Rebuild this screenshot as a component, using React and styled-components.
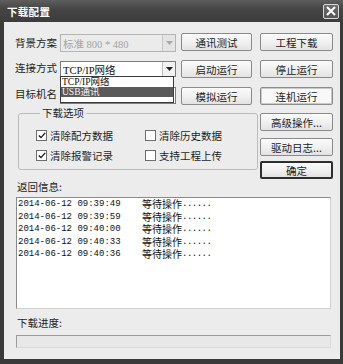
import React from "react";
import styled, { createGlobalStyle } from "styled-components";

const GlobalStyle = createGlobalStyle`
  html, body {
    margin: 0;
    padding: 0;
    background: #ffffff;
  }
  body {
    font-family: "Noto Sans CJK SC", "DejaVu Sans", sans-serif;
    color: #1e1e1e;
  }
`;

const Frame = styled.div`
  width: 343px;
  height: 364px;
  box-sizing: border-box;
  background: #3a3a3a;
  display: flex;
  flex-direction: column;
`;

const TitleBar = styled.div`
  height: 22px;
  flex: none;
  display: flex;
  align-items: center;
  justify-content: space-between;
  padding: 0 4px 0 7px;
  background: linear-gradient(#5e5e5e, #454545 40%, #3c3c3c);
`;

const Title = styled.span`
  color: #ffffff;
  font-size: 10.5px;
  font-weight: 700;
  letter-spacing: 0.3px;
`;

const CloseButton = styled.div`
  width: 16px;
  height: 15px;
  box-sizing: border-box;
  border: 1px solid #d8d8d8;
  border-radius: 2px;
  background: linear-gradient(#6c6c6c, #555555);
  display: flex;
  align-items: center;
  justify-content: center;
`;

const Body = styled.div`
  flex: 1;
  margin: 0 3px 5px 4px;
  background: #ececec;
  padding: 11px 7px 0 11px;
  display: flex;
  flex-direction: column;
`;

const TopGrid = styled.div`
  display: grid;
  grid-template-columns: 166px 79px 73px;
  grid-template-rows: 27px 27px 26px 25px 23px 20px;
`;

const FormRow = styled.div`
  grid-column: 1;
  grid-row: ${(p) => p.$row};
  display: flex;
  align-items: flex-start;
`;

const Label = styled.span`
  width: 45px;
  flex: none;
  font-size: 10.5px;
  line-height: 18px;
  margin-top: ${(p) => p.$top || 0}px;
`;

const Combo = styled.div`
  position: relative;
  width: 116px;
  height: ${(p) => p.$h}px;
  margin-top: ${(p) => p.$top || 0}px;
  box-sizing: border-box;
  border: 1px solid ${(p) => (p.$disabled ? "#b4b4b4" : "#7c7c7c")};
  background: ${(p) => (p.$disabled ? "#ebebeb" : "#ffffff")};
  display: flex;
  align-items: center;
  padding-left: 2px;
`;

const ComboText = styled.span`
  flex: 1;
  font-family: "Liberation Serif", "Noto Sans CJK SC", serif;
  font-size: 10.5px;
  color: ${(p) => (p.$disabled ? "#a2a2a2" : "#111111")};
  white-space: nowrap;
`;

const ArrowBox = styled.div`
  width: 13px;
  height: 100%;
  box-sizing: border-box;
  border-left: 1px solid ${(p) => (p.$disabled ? "#c8c8c8" : "#bdbdbd")};
  background: ${(p) => (p.$disabled ? "#e4e4e4" : "#f2f2f2")};
  display: flex;
  align-items: center;
  justify-content: center;
`;

const DropList = styled.div`
  position: absolute;
  top: 14px;
  left: -1px;
  width: 114px;
  height: 27px;
  box-sizing: border-box;
  border: 1px solid #3c3c3c;
  background: #ffffff;
  z-index: 2;
`;

const DropItem = styled.div`
  height: 10px;
  line-height: 10px;
  overflow: hidden;
  padding-left: 1px;
  font-family: "Liberation Serif", "Noto Sans CJK SC", serif;
  font-size: 9.5px;
  background: ${(p) => (p.$active ? "#5a5a5a" : "transparent")};
  color: ${(p) => (p.$active ? "#f4f4f4" : "#111111")};
  white-space: nowrap;
`;

const TextInput = styled.div`
  width: 116px;
  height: 17px;
  box-sizing: border-box;
  border: 1px solid #7c7c7c;
  background: #ffffff;
`;

const Button = styled.div`
  grid-column: ${(p) => p.$col};
  grid-row: ${(p) => p.$row};
  width: ${(p) => (p.$col === 2 ? 71 : 73)}px;
  height: 18px;
  box-sizing: border-box;
  border: ${(p) => (p.$default ? "2px solid #2e2e2e" : "1px solid #8a8a8a")};
  border-radius: 2px;
  background: ${(p) =>
    p.$focus ? "#f8f8f8" : "linear-gradient(#fbfbfb, #eeeeee 60%, #e2e2e2)"};
  box-shadow: ${(p) => (p.$focus ? "inset 0 0 0 1px #c9c9c9" : "none")};
  display: flex;
  align-items: center;
  justify-content: center;
  font-size: 10.5px;
  color: #222222;
  white-space: nowrap;
`;

const Group = styled.fieldset`
  grid-column: 1 / 3;
  grid-row: 4 / 7;
  align-self: start;
  margin: -7px 2px 0 3px;
  height: 64px;
  box-sizing: border-box;
  border: 1px solid #bcbcbc;
  border-radius: 3px;
  padding: 5px 0 0 17px;
  display: grid;
  grid-template-columns: 109px auto;
  grid-auto-rows: 20px;
  align-content: start;
`;

const Legend = styled.legend`
  margin-left: 4px;
  padding: 0 2px;
  font-size: 10.5px;
  line-height: 14px;
`;

const CheckRow = styled.div`
  display: flex;
  align-items: center;
  gap: 3px;
  font-size: 10.5px;
`;

const CheckBox = styled.div`
  width: 11px;
  height: 11px;
  box-sizing: border-box;
  border: 1px solid #6e6e6e;
  background: #ffffff;
  display: flex;
  align-items: center;
  justify-content: center;
`;

const SectionLabel = styled.div`
  font-size: 10.5px;
  line-height: 12px;
  margin: ${(p) => p.$top || 0}px 0 0 2px;
`;

const LogBox = styled.div`
  width: 315px;
  height: 112px;
  margin: 4px 0 0 1px;
  box-sizing: border-box;
  border: 1px solid #8a8a8a;
  border-right-color: #d2d2d2;
  border-bottom-color: #d2d2d2;
  background: #ffffff;
  padding-left: 1px;
`;

const LogLine = styled.div`
  display: flex;
  align-items: center;
  height: 12.5px;
  line-height: 12px;
  font-family: "Liberation Mono", "DejaVu Sans Mono", monospace;
  font-size: 9px;
  color: #111111;
`;

const Stamp = styled.span`
  width: 124px;
  flex: none;
`;

const Msg = styled.span`
  font-family: "Noto Sans CJK SC", sans-serif;
  font-size: 10px;
  line-height: 12px;
`;

const Dots = styled.span`
  font-family: "Liberation Mono", monospace;
  font-size: 9px;
  letter-spacing: -0.5px;
`;

const Progress = styled.div`
  width: 315px;
  height: 13px;
  margin: 6px 0 0 1px;
  box-sizing: border-box;
  border: 1px solid #9c9c9c;
  border-right-color: #dadada;
  border-bottom-color: #dadada;
  background: #e8e8e8;
`;

const Arrow = ({ disabled }) => (
  <svg width="7" height="4" viewBox="0 0 7 4">
    <path d="M0 0h7L3.5 4z" fill={disabled ? "#a8a8a8" : "#222"} />
  </svg>
);

const Check = () => (
  <svg width="8" height="7" viewBox="0 0 8 7">
    <path d="M0.8 3.4l2.2 2.2L7.2 0.9" fill="none" stroke="#1c1c1c" strokeWidth="1.4" />
  </svg>
);

const logs = [
  "2014-06-12 09:39:49",
  "2014-06-12 09:39:59",
  "2014-06-12 09:40:00",
  "2014-06-12 09:40:33",
  "2014-06-12 09:40:36",
];

const App = () => {
  return (
    <>
      <GlobalStyle />
      <Frame>
        <TitleBar>
          <Title>下载配置</Title>
          <CloseButton>
            <svg width="10" height="10" viewBox="0 0 10 10">
              <path d="M1 1L9 9M9 1L1 9" stroke="#fff" strokeWidth="2" />
            </svg>
          </CloseButton>
        </TitleBar>
        <Body>
          <TopGrid>
            <FormRow $row={1}>
              <Label $top={1}>背景方案</Label>
              <Combo $h={18} $top={1} $disabled>
                <ComboText $disabled>标准 800 * 480</ComboText>
                <ArrowBox $disabled>
                  <Arrow disabled />
                </ArrowBox>
              </Combo>
            </FormRow>
            <FormRow $row={2}>
              <Label $top={-1}>连接方式</Label>
              <Combo $h={16} $top={1}>
                <ComboText>TCP/IP网络</ComboText>
                <ArrowBox>
                  <Arrow />
                </ArrowBox>
                <DropList>
                  <DropItem>TCP/IP网络</DropItem>
                  <DropItem $active>USB通讯</DropItem>
                </DropList>
              </Combo>
            </FormRow>
            <FormRow $row={3}>
              <Label $top={-2}>目标机名</Label>
              <TextInput />
            </FormRow>

            <Button $col={2} $row={1}>通讯测试</Button>
            <Button $col={2} $row={2}>启动运行</Button>
            <Button $col={2} $row={3}>模拟运行</Button>
            <Button $col={3} $row={1}>工程下载</Button>
            <Button $col={3} $row={2}>停止运行</Button>
            <Button $col={3} $row={3} $focus>连机运行</Button>
            <Button $col={3} $row={4}>高级操作...</Button>
            <Button $col={3} $row={5}>驱动日志...</Button>
            <Button $col={3} $row={6} $default>确定</Button>

            <Group>
              <Legend>下载选项</Legend>
              <CheckRow>
                <CheckBox><Check /></CheckBox>清除配方数据
              </CheckRow>
              <CheckRow>
                <CheckBox />清除历史数据
              </CheckRow>
              <CheckRow>
                <CheckBox><Check /></CheckBox>清除报警记录
              </CheckRow>
              <CheckRow>
                <CheckBox />支持工程上传
              </CheckRow>
            </Group>
          </TopGrid>

          <SectionLabel>返回信息:</SectionLabel>
          <LogBox>
            {logs.map((t) => (
              <LogLine key={t}>
                <Stamp>{t}</Stamp>
                <Msg>等待操作</Msg>
                <Dots>......</Dots>
              </LogLine>
            ))}
          </LogBox>
          <SectionLabel $top={8}>下载进度:</SectionLabel>
          <Progress />
        </Body>
      </Frame>
    </>
  );
};

export default App;
